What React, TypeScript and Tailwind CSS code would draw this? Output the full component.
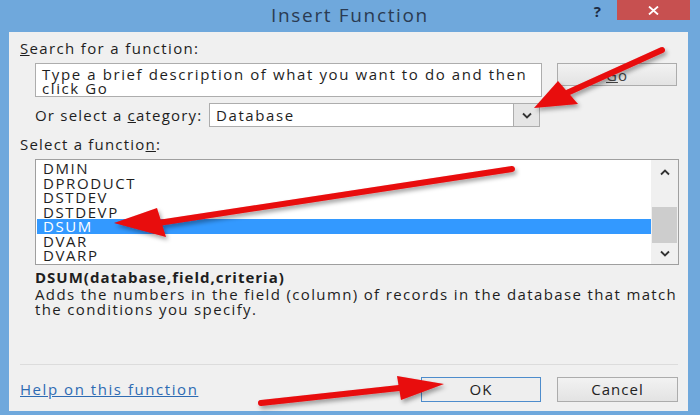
import React from "react";

const functions = ["DMIN", "DPRODUCT", "DSTDEV", "DSTDEVP", "DSUM", "DVAR", "DVARP"];

function Chevron({ up = false }: { up?: boolean }) {
  return (
    <svg width="10" height="7" viewBox="0 0 10 7" className={up ? "rotate-180" : ""}>
      <path d="M1 1.5 L5 5.5 L9 1.5" fill="none" stroke="#333" strokeWidth="1.8" />
    </svg>
  );
}

function Arrow({ tail, tip, a, b }: { tail: [number, number]; tip: [number, number]; a: [number, number]; b: [number, number] }) {
  const mid: [number, number] = [(a[0] + b[0]) / 2, (a[1] + b[1]) / 2];
  return (
    <g>
      <line x1={tail[0]} y1={tail[1]} x2={mid[0]} y2={mid[1]} stroke="#e8090b" strokeWidth="6" strokeLinecap="round" />
      <polygon points={`${tip[0]},${tip[1]} ${a[0]},${a[1]} ${b[0]},${b[1]}`} fill="#e8090b" />
    </g>
  );
}

export default function App() {
  return (
    <div className="relative w-[700px] h-[415px] bg-[#6fa8dc] flex flex-col overflow-hidden font-['Open_Sans','Liberation_Sans',sans-serif] text-[#1e1e1e]">
      {/* title bar */}
      <div className="h-[32px] flex items-start shrink-0">
        <div className="w-[110px]" />
        <div className="flex-1 text-center text-[19px] leading-[30px] tracking-[1.65px] text-[#2a3b52]">Insert Function</div>
        <div className="w-[110px] flex items-start justify-end pr-[10px]">
          <span className="mt-[1px] mr-[16px] text-[15px] font-bold leading-[20px] text-[#1c2c44]">?</span>
          <div className="w-[73px] h-[20px] bg-[#c75050] flex items-center justify-center">
            <svg width="11" height="9" viewBox="0 0 11 9">
              <path d="M1 0.5 L10 8.5 M10 0.5 L1 8.5" stroke="#fff" strokeWidth="1.8" />
            </svg>
          </div>
        </div>
      </div>

      {/* dialog body */}
      <div className="flex-1 ml-[9px] mr-[12px] mb-[4px] bg-[#f0f0f0] flex flex-col pl-[11px] text-[15px]">
        <div className="mt-[7px] leading-[18px] tracking-[1.35px]">
          <span className="underline">S</span>earch for a function:
        </div>

        <div className="mt-[6px] ml-[15px] flex items-start gap-[15px]">
          <div className="w-[507px] h-[34px] bg-white border border-[#adadad] pl-[6px] pt-[3px] text-[15px] leading-[14px] tracking-[1.6px]">
            Type a brief description of what you want to do and then click Go
          </div>
          <button className="w-[120px] h-[23px] border border-[#acacac] bg-gradient-to-b from-[#f2f2f2] to-[#e3e3e3] text-[15px] leading-[20px] tracking-[1px] text-[#444]">
            <span className="underline">G</span>o
          </button>
        </div>

        <div className="mt-[6px] ml-[15px] flex items-center">
          <span className="w-[174px] leading-[18px] tracking-[1.2px]">
            Or select a <span className="underline">c</span>ategory:
          </span>
          <div className="w-[331px] h-[24px] bg-white border border-[#adadad] flex items-center">
            <span className="flex-1 pl-[6px] text-[15px] leading-[18px] tracking-[1.6px]">Database</span>
            <div className="w-[26px] h-full bg-[#e5e5e5] border-l border-[#adadad] flex items-center justify-center">
              <Chevron />
            </div>
          </div>
        </div>

        <div className="mt-[8px] leading-[18px] tracking-[1.2px]">
          Select a functio<span className="underline">n</span>:
        </div>

        <div className="mt-[6px] ml-[15px] w-[644px] h-[106px] bg-white border border-[#9f9f9f] flex">
          <div className="flex-1 pt-[1px] pl-[1px] text-[15px] tracking-[1.6px]">
            {functions.map((f) => (
              <div
                key={f}
                className={`h-[14.5px] leading-[14.5px] pl-[6px] ${f === "DSUM" ? "bg-[#3399ff] text-white" : ""}`}
              >
                {f}
              </div>
            ))}
          </div>
          <div className="w-[27px] bg-[#f0f0f0] flex flex-col items-center">
            <div className="h-[24px] flex items-center justify-center">
              <Chevron up />
            </div>
            <div className="w-full px-[1px] mt-[23px]">
              <div className="h-[36px] bg-[#cdcdcd]" />
            </div>
            <div className="flex-1 w-full flex items-center justify-center">
              <Chevron />
            </div>
          </div>
        </div>

        <div className="mt-[3px] ml-[15px] font-bold text-[15px] leading-[18px] tracking-[1px]">
          DSUM(database,field,criteria)
        </div>
        <div className="ml-[15px] mt-[1px] text-[15px] leading-[15px] tracking-[1.36px]">
          Adds the numbers in the field (column) of records in the database that match the conditions you specify.
        </div>

        <div className="mt-auto mr-[10px] border-t border-[#dcdcdc]" />
        <div className="h-[46px] flex items-center pr-[10px]">
          <a className="flex-1 text-[#2e6bb3] underline leading-[18px] mt-[2px] tracking-[1.55px]">Help on this function</a>
          <button className="w-[120px] h-[25px] mt-[2px] border border-[#4d8ccc] bg-[#eeeeee] text-[15px] tracking-[1px] text-[#222]">OK</button>
          <button className="ml-[16px] w-[121px] h-[25px] mt-[2px] border border-[#acacac] bg-gradient-to-b from-[#f2f2f2] to-[#e3e3e3] text-[15px] tracking-[1px] text-[#222]">
            Cancel
          </button>
        </div>
      </div>

      {/* red annotation arrows */}
      <svg className="absolute inset-0 pointer-events-none" width="700" height="415" viewBox="0 0 700 415">
        <defs>
          <filter id="sh" x="-10%" y="-10%" width="120%" height="130%">
            <feDropShadow dx="2" dy="3" stdDeviation="2" floodColor="#000" floodOpacity="0.35" />
          </filter>
        </defs>
        <g filter="url(#sh)">
          <Arrow tail={[662, 50]} tip={[534, 108]} a={[558, 81]} b={[578, 104]} />
          <Arrow tail={[512, 169]} tip={[114, 223]} a={[157, 208]} b={[166, 237]} />
          <Arrow tail={[261, 403]} tip={[444, 384]} a={[397, 376]} b={[401, 400]} />
        </g>
      </svg>
    </div>
  );
}
